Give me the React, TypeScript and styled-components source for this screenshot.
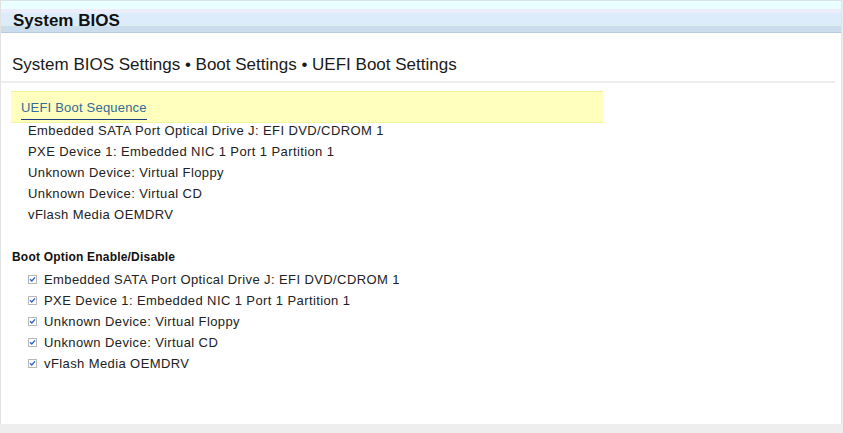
import { FC } from "react";
import styled, { createGlobalStyle } from "styled-components";

const GlobalStyle = createGlobalStyle`
  html, body {
    margin: 0;
    padding: 0;
    background: #eeeeee;
    font-family: "Liberation Sans", Arial, sans-serif;
  }
`;

const bootSequence = [
  "Embedded SATA Port Optical Drive J: EFI DVD/CDROM 1",
  "PXE Device 1: Embedded NIC 1 Port 1 Partition 1",
  "Unknown Device: Virtual Floppy",
  "Unknown Device: Virtual CD",
  "vFlash Media OEMDRV",
];

const Page = styled.div`
  width: 843px;
  height: 433px;
  background: #eeeeee;
`;

const Panel = styled.div`
  width: 840px;
  height: 424px;
  background: #ffffff;
  border-left: 1px solid #e2e2e2;
  border-right: 1px solid #e2e2e2;
  display: flex;
  flex-direction: column;
`;

const Header = styled.div`
  height: 33px;
  box-sizing: border-box;
  padding: 10px 0 0 12px;
  border-top: 1px solid #dde4e8;
  border-bottom: 1px solid #b9c9df;
  background: linear-gradient(
    to bottom,
    #eaffff 0px,
    #eaffff 8px,
    #ececfb 8px,
    #ececfb 12px,
    #dcecfb 12px,
    #dcecfb 24px,
    #dcefe4 24px,
    #dcefe4 25px,
    #cbdcec 25px,
    #cbdcec 33px
  );
  font-size: 17px;
  line-height: 20px;
  font-weight: bold;
  color: #111111;
`;

const Breadcrumb = styled.h2`
  margin: 22px 6px 0 0;
  padding: 0 0 6px 11px;
  border-bottom: 2px solid #eeeeee;
  font-size: 17px;
  font-weight: normal;
  color: #1a1a1a;
  line-height: 20px;
`;

const SequenceBox = styled.div`
  margin: 8px 0 0 10px;
  width: 592px;
  height: 32px;
  box-sizing: border-box;
  padding: 6px 0 0 10px;
  background: #ffffbe;
  border-top: 1px solid #f2f29a;
  border-bottom: 1px solid #f2f29a;
`;

const SequenceTitle = styled.span`
  display: inline-block;
  font-size: 13px;
  letter-spacing: 0.2px;
  color: #336b99;
  padding-bottom: 4px;
  border-bottom: 1px solid #1f3f80;
`;

const List = styled.div<{ $indent: number }>`
  display: flex;
  flex-direction: column;
  padding-left: ${(p) => p.$indent}px;
`;

const Item = styled.div`
  display: flex;
  align-items: center;
  gap: 7px;
  height: 15px;
  padding-bottom: 6px;
  line-height: 15px;
  font-size: 13px;
  letter-spacing: 0.4px;
  color: #222222;
`;

const SectionTitle = styled.div`
  margin: 21px 0 6px 11px;
  font-size: 12px;
  letter-spacing: 0.2px;
  font-weight: bold;
  color: #111111;
  height: 17px;
  line-height: 17px;
`;

const Check = styled.span`
  width: 9px;
  height: 9px;
  box-sizing: border-box;
  border: 1px solid #b8b8b8;
  background: #ffffff;
  display: flex;
  align-items: center;
  justify-content: center;
`;

const CheckMark: FC = () => (
  <Check>
    <svg width="7" height="7" viewBox="0 0 7 7">
      <path d="M1 3.2 L2.8 5 L6 1.4" stroke="#2f5fc7" strokeWidth="1.4" fill="none" />
    </svg>
  </Check>
);

const App: FC = () => (
  <Page>
    <GlobalStyle />
    <Panel>
      <Header>System BIOS</Header>
      <Breadcrumb>System BIOS Settings • Boot Settings • UEFI Boot Settings</Breadcrumb>
      <SequenceBox>
        <SequenceTitle>UEFI Boot Sequence</SequenceTitle>
      </SequenceBox>
      <List $indent={27}>
        {bootSequence.map((d) => (
          <Item key={d}>{d}</Item>
        ))}
      </List>
      <SectionTitle>Boot Option Enable/Disable</SectionTitle>
      <List $indent={27}>
        {bootSequence.map((d) => (
          <Item key={d}>
            <CheckMark />
            {d}
          </Item>
        ))}
      </List>
    </Panel>
  </Page>
);

export default App;
